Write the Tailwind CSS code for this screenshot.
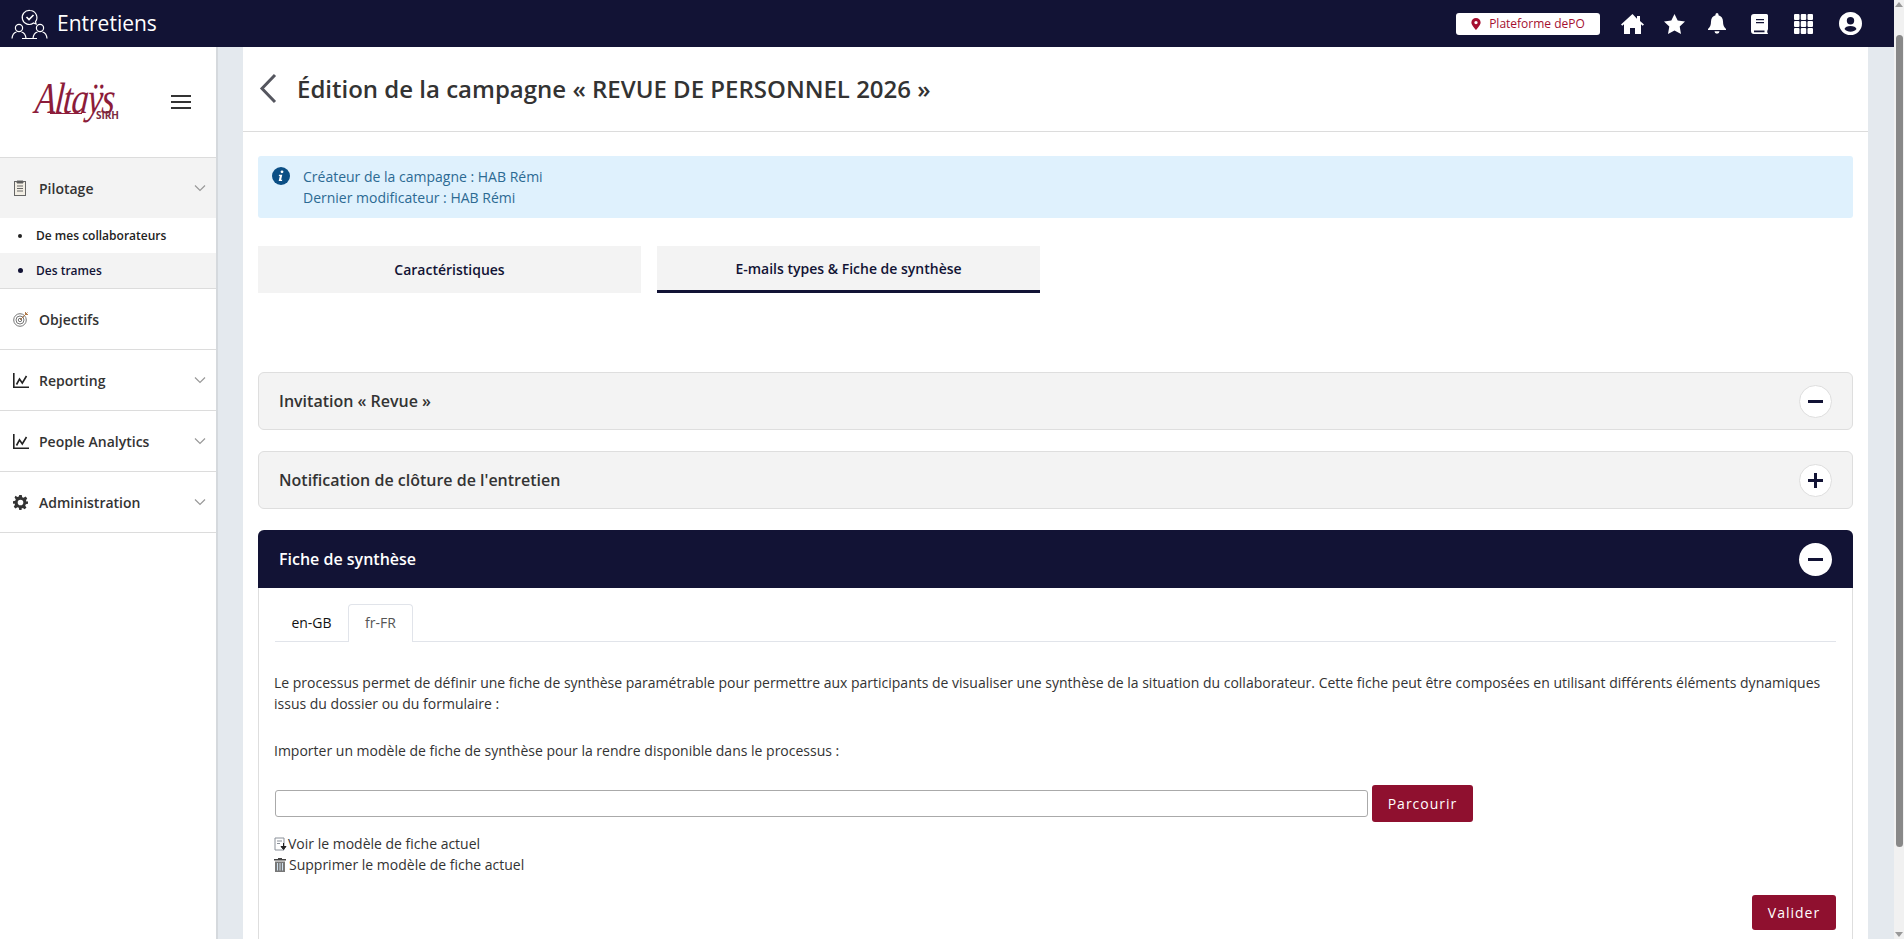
<!DOCTYPE html>
<html lang="fr">

<head>
    <meta charset="UTF-8">
    <title>Entretiens</title>
    <script src="https://cdn.jsdelivr.net/npm/@tailwindcss/browser@4"></script>
    <meta name="viewport" content="width=device-width, initial-scale=1.0">
</head>

<body class="h-screen overflow-hidden bg-[#e4e9ee] font-['Open_Sans',sans-serif] text-[#333]">
    <div class="flex h-[939px]">
        <div class="flex w-[1894px] flex-col">

            <!-- Top bar -->
            <header class="flex h-[47px] shrink-0 items-center bg-[#121335] text-white">
                <svg class="ml-[11px] h-[30px] w-[37px]" viewBox="0 0 37 30" fill="none" stroke="white" stroke-width="1.2">
                    <path d="M19 1.500a7 7 0 0 1 5.500 11.200l.6 2.300-2.600-1a7 7 0 1 1-3.500-12.500z" />
                    <path d="M15.500 8l2.500 2.500 4.500-4.500" stroke-width="1.600" />
                    <circle cx="8" cy="19" r="3.600" />
                    <path d="M1 29.500c.3-3.500 2.500-6 4.500-6.500M15 29.500c-.3-3.500-2.500-6-4.500-6.500" />
                    <circle cx="29" cy="19" r="3.600" />
                    <path d="M22 29.500c.3-3.500 2.500-6 4.500-6.500M36 29.500c-.3-3.500-2.500-6-4.500-6.500M11 29.500h15" />
                </svg>
                <span class="ml-[9px] text-[21px]">Entretiens</span>

                <a class="ml-auto flex h-[22px] w-[144px] items-center justify-center gap-[8px] rounded-[3px] bg-white text-[12px] text-[#a50f30]">
                    <svg class="h-[12px] w-[10px]" viewBox="0 0 10 13" fill="#a50f30">
                        <path fill-rule="evenodd" d="M5 0a5 5 0 0 1 5 5c0 2.500-3 6-5 8-2-2-5-5.500-5-8a5 5 0 0 1 5-5zm0 3.200a1.800 1.800 0 1 0 0 3.600 1.800 1.800 0 0 0 0-3.600z" />
                    </svg>
                    Plateforme dePO
                </a>

                <svg class="ml-[21px] h-[20px] w-[23px]" viewBox="0 0 23 20" fill="white">
                    <path d="M11.500 0L0 10.500l1.300 1.300L3 10.300V20h6v-6h5v6h6v-9.700l1.700 1.500 1.300-1.300-4-3.600V2h-3v2.800z" />
                </svg>
                <svg class="ml-[20px] h-[20px] w-[21px]" viewBox="0 0 21 20" fill="white">
                    <path d="M10.500 0l3.200 6.500 7.300 1-5.300 5.100 1.300 7.300-6.500-3.400-6.500 3.400 1.300-7.300L0 7.500l7.300-1z" />
                </svg>
                <svg class="ml-[23px] h-[21px] w-[18px]" viewBox="0 0 18 21" fill="white">
                    <path d="M9 0a1.500 1.500 0 0 1 1.500 1.500v.7C13.500 3 15 5.500 15 8.500c0 4 1 5.500 3 7.500v1H0v-1c2-2 3-3.500 3-7.500 0-3 1.500-5.500 4.500-6.300v-.7A1.500 1.500 0 0 1 9 0zM6.500 18.200h5a2.500 2.500 0 0 1-5 0z" />
                </svg>
                <svg class="ml-[25px] h-[20px] w-[17px]" viewBox="0 0 17 20" fill="white">
                    <path fill-rule="evenodd" d="M3 0h12.500a1.500 1.500 0 0 1 1.500 1.500V15c0 .8-.4 1-.6 1.500-.2.800-.2 1.700 0 2.300.3.400.6.500.6 1 0 .2-.2.200-.5.200H3a3 3 0 0 1-3-3V3a3 3 0 0 1 3-3zm2 5v1.200h8V5zm0 3v1.200h8V8zM3 16.500v1.800h10.500v-1.800z" />
                </svg>
                <svg class="ml-[26px] h-[20px] w-[19px]" viewBox="0 0 19 20" fill="white">
                    <rect width="5.500" height="6" rx="1" />
                    <rect x="6.750" width="5.500" height="6" rx="1" />
                    <rect x="13.500" width="5.500" height="6" rx="1" />
                    <rect y="7" width="5.500" height="6" rx="1" />
                    <rect x="6.750" y="7" width="5.500" height="6" rx="1" />
                    <rect x="13.500" y="7" width="5.500" height="6" rx="1" />
                    <rect y="14" width="5.500" height="6" rx="1" />
                    <rect x="6.750" y="14" width="5.500" height="6" rx="1" />
                    <rect x="13.500" y="14" width="5.500" height="6" rx="1" />
                </svg>
                <svg class="mr-[32px] ml-[26px] h-[23px] w-[23px]" viewBox="0 0 23 23" fill="white">
                    <path fill-rule="evenodd" d="M11.500 0a11.500 11.500 0 1 1 0 23 11.500 11.500 0 0 1 0-23zm0 5a3.700 3.700 0 1 0 0 7.400 3.700 3.700 0 0 0 0-7.400zm0 9c-3 0-5.500 1.200-6 3 1.400 1.700 3.600 2.800 6 2.800s4.600-1.100 6-2.800c-.5-1.800-3-3-6-3z" />
                </svg>
            </header>

            <div class="flex min-h-0 flex-1">

                <!-- Sidebar -->
                <aside class="w-[218px] shrink-0 border-r-2 border-[#d5d9dd] bg-white">
                    <div class="flex h-[111px] items-center border-b border-[#dcdcdc] pl-[37px]">
                        <div class="relative h-[46px] w-[82px] text-[#8c1c3a]">
                            <span class="block origin-top-left -skew-x-6 scale-x-[.78] font-['Liberation_Serif',serif] text-[44px] leading-[40px] tracking-[-1.500px] italic">Altaÿs</span>
                            <span class="absolute right-0 bottom-[5px] text-[10px] leading-none font-bold text-[#7a2a40]">SIRH</span>
                            <span class="absolute bottom-[11px] left-[13px] h-[1.500px] w-[32px] bg-[#8c1c3a]"></span>
                        </div>
                        <div class="ml-[52px] flex w-[20px] flex-col gap-[4px]">
                            <span class="h-[2px] bg-[#333]"></span>
                            <span class="h-[2px] bg-[#333]"></span>
                            <span class="h-[2px] bg-[#333]"></span>
                        </div>
                    </div>

                    <div class="flex h-[60px] items-center bg-[#f3f3f3] pl-[13px] pr-[10px] text-[14px] font-semibold">
                        <svg class="h-[16px] w-[14px]" viewBox="0 0 14 16" fill="none" stroke="#666" stroke-width="1">
                            <rect x="1.500" y="1.500" width="11" height="14" fill="#f3efe5" />
                            <path d="M4 1h6v2H4z" fill="#555" />
                            <path d="M4 6h6M4 8.500h6M4 11h6" />
                        </svg>
                        <span class="ml-[12px]">Pilotage</span>
                        <svg class="ml-auto h-[8px] w-[12px]" viewBox="0 0 12 8" fill="none" stroke="#999" stroke-width="1.200">
                            <path d="M1 1.500l5 5 5-5" />
                        </svg>
                    </div>
                    <div class="flex h-[35px] items-center pl-[18px] text-[12px] font-semibold text-[#222]">
                        <span class="h-[4px] w-[4px] rounded-full bg-[#222]"></span>
                        <span class="ml-[14px]">De mes collaborateurs</span>
                    </div>
                    <div class="flex h-[36px] items-center border-b border-[#dcdcdc] bg-[#f3f3f3] pl-[18px] text-[12px] font-semibold text-[#121335]">
                        <span class="h-[5px] w-[5px] rounded-full bg-[#121335]"></span>
                        <span class="ml-[13px]">Des trames</span>
                    </div>

                    <div class="flex h-[61px] items-center border-b border-[#dcdcdc] pl-[13px] pr-[10px] text-[14px] font-semibold">
                        <svg class="h-[16px] w-[16px]" viewBox="0 0 16 16" fill="none" stroke="#777" stroke-width="1">
                            <circle cx="7" cy="9" r="6.300" />
                            <circle cx="7" cy="9" r="4" />
                            <circle cx="7" cy="9" r="1.700" />
                            <path d="M7 9l7.500-7.500M12.500 1v2.500H15" stroke="#b07a4a" />
                        </svg>
                        <span class="ml-[10px]">Objectifs</span>
                    </div>
                    <div class="flex h-[61px] items-center border-b border-[#dcdcdc] pl-[13px] pr-[10px] text-[14px] font-semibold">
                        <svg class="h-[15px] w-[16px]" viewBox="0 0 16 15" fill="none" stroke="#222" stroke-width="1.600">
                            <path d="M.8 0v14.200H16" />
                            <path d="M3.500 11.500L6.500 6l2.800 4L13.500 3" />
                        </svg>
                        <span class="ml-[10px]">Reporting</span>
                        <svg class="ml-auto h-[8px] w-[12px]" viewBox="0 0 12 8" fill="none" stroke="#999" stroke-width="1.200">
                            <path d="M1 1.500l5 5 5-5" />
                        </svg>
                    </div>
                    <div class="flex h-[61px] items-center border-b border-[#dcdcdc] pl-[13px] pr-[10px] text-[14px] font-semibold">
                        <svg class="h-[15px] w-[16px]" viewBox="0 0 16 15" fill="none" stroke="#222" stroke-width="1.600">
                            <path d="M.8 0v14.200H16" />
                            <path d="M3.500 11.500L6.500 6l2.800 4L13.500 3" />
                        </svg>
                        <span class="ml-[10px]">People Analytics</span>
                        <svg class="ml-auto h-[8px] w-[12px]" viewBox="0 0 12 8" fill="none" stroke="#999" stroke-width="1.200">
                            <path d="M1 1.500l5 5 5-5" />
                        </svg>
                    </div>
                    <div class="flex h-[61px] items-center border-b border-[#dcdcdc] pl-[13px] pr-[10px] text-[14px] font-semibold">
                        <svg class="h-[15px] w-[15px]" viewBox="0 0 24 24" fill="#333">
                            <path fill-rule="evenodd" d="M10 0h4l.7 3.500 2.300 1 3-2 2.800 2.800-2 3 1 2.300L24 10v4l-3.500.7-1 2.300 2 3-2.800 2.800-3-2-2.300 1L14 24h-4l-.7-3.500-2.300-1-3 2L1.200 18.700l2-3-1-2.300L0 14v-4l3.500-.7 1-2.300-2-3L4 1.200l3 2 2.300-1zM12 7.500a4.500 4.500 0 1 0 0 9 4.500 4.500 0 0 0 0-9z" />
                        </svg>
                        <span class="ml-[11px]">Administration</span>
                        <svg class="ml-auto h-[8px] w-[12px]" viewBox="0 0 12 8" fill="none" stroke="#999" stroke-width="1.200">
                            <path d="M1 1.500l5 5 5-5" />
                        </svg>
                    </div>
                </aside>

                <!-- Main -->
                <main class="ml-[25px] mr-[26px] min-w-0 flex-1 overflow-hidden bg-white">
                    <div class="flex h-[85px] items-center border-b border-[#dcdcdc] pl-[16px]">
                        <svg class="-mt-[2px] h-[31px] w-[18px]" viewBox="0 0 18 31" fill="none" stroke="#55565f" stroke-width="3">
                            <path d="M16 2L3 15.500 16 29" />
                        </svg>
                        <h1 class="ml-[20px] text-[24px] font-semibold text-[#333]">Édition de la campagne « REVUE DE PERSONNEL 2026 »</h1>
                    </div>

                    <div class="px-[15px]">
                        <div class="mt-[24px] flex h-[62px] rounded-[3px] bg-[#dff1fd] pl-[14px] pt-[10px]">
                            <svg class="mt-[1px] h-[18px] w-[18px]" viewBox="0 0 18 18">
                                <circle cx="9" cy="9" r="9" fill="#0b4f85" />
                                <circle cx="10" cy="4.800" r="1.400" fill="white" />
                                <path d="M7 7.800h3.300l-1.200 5h1.200l-.3 1.200H6.700l1.100-5H6.800z" fill="white" />
                            </svg>
                            <p class="ml-[13px] text-[14px] leading-[21px] text-[#2c6a93]">Créateur de la campagne : HAB Rémi<br>Dernier modificateur : HAB Rémi</p>
                        </div>

                        <div class="mt-[28px] flex gap-[16px] text-[14px] font-semibold text-[#121335]">
                            <div class="flex h-[47px] w-[383px] items-center justify-center bg-[#f3f3f3]">Caractéristiques</div>
                            <div class="flex h-[47px] w-[383px] items-center justify-center border-b-[3px] border-[#121335] bg-[#f3f3f3]">E-mails types &amp; Fiche de synthèse</div>
                        </div>

                        <div class="mt-[79px] flex h-[58px] items-center justify-between rounded-[6px] border border-[#dedede] bg-[#f3f3f3] pl-[20px] pr-[20px] text-[16px] font-semibold">
                            Invitation « Revue »
                            <span class="flex h-[33px] w-[33px] items-center justify-center rounded-full border border-[#dedede] bg-white">
                                <svg class="h-[15px] w-[15px]" viewBox="0 0 15 15" fill="#121335"><rect y="6" width="15" height="3" /></svg>
                            </span>
                        </div>
                        <div class="mt-[21px] flex h-[58px] items-center justify-between rounded-[6px] border border-[#dedede] bg-[#f3f3f3] pl-[20px] pr-[20px] text-[16px] font-semibold">
                            Notification de clôture de l'entretien
                            <span class="flex h-[33px] w-[33px] items-center justify-center rounded-full border border-[#dedede] bg-white">
                                <svg class="h-[15px] w-[15px]" viewBox="0 0 15 15" fill="#121335"><path d="M6 0h3v6h6v3H9v6H6V9H0V6h6z" /></svg>
                            </span>
                        </div>

                        <div class="mt-[21px] rounded-t-[6px] border-x border-[#dedede]">
                            <div class="-mx-px flex h-[58px] items-center justify-between rounded-t-[6px] bg-[#121335] pl-[21px] pr-[21px] text-[16px] font-semibold text-white">
                                Fiche de synthèse
                                <span class="flex h-[33px] w-[33px] items-center justify-center rounded-full bg-white">
                                    <svg class="h-[15px] w-[15px]" viewBox="0 0 15 15" fill="#121335"><rect y="6" width="15" height="3" /></svg>
                                </span>
                            </div>
                            <div class="px-[16px] pt-[16px] pb-[60px] text-[14px] leading-[21px]">
                                <div class="flex h-[38px] border-b border-[#e1e4ea]">
                                    <span class="flex h-[36px] w-[73px] items-center justify-center text-[#111]">en-GB</span>
                                    <span class="flex h-[38px] w-[65px] items-center justify-center rounded-t-[4px] border-x border-t border-[#e1e4ea] bg-white pb-[2px] text-[#555]">fr-FR</span>
                                </div>
                                <p class="mt-[30px] -ml-px">Le processus permet de définir une fiche de synthèse paramétrable pour permettre aux participants de visualiser une synthèse de la situation du collaborateur. Cette fiche peut être composées en utilisant différents éléments dynamiques issus du dossier ou du formulaire :</p>
                                <p class="mt-[26px] -ml-px">Importer un modèle de fiche de synthèse pour la rendre disponible dans le processus :</p>
                                <div class="mt-[24px] flex items-center gap-[4px]">
                                    <input type="text" class="h-[27px] w-[1093px] rounded-[3px] border border-[#aaa] bg-white">
                                    <button class="h-[37px] w-[101px] rounded-[3px] bg-[#8f102f] text-[14px] tracking-[1px] text-white">Parcourir</button>
                                </div>
                                <p class="mt-[11px] -ml-px flex items-center gap-[1px]">
                                    <svg class="h-[14px] w-[13px]" viewBox="0 0 13 14" fill="none" stroke="#8a9099">
                                        <path d="M1 1h9v12H1zM3 4h5M3 6.500h3" />
                                        <path d="M9.500 6v5M7 9.500l2.500 3 2.500-3z" stroke="#222" fill="#222" />
                                    </svg>
                                    Voir le modèle de fiche actuel
                                </p>
                                <p class="-ml-px flex items-center gap-[3px]">
                                    <svg class="h-[14px] w-[12px]" viewBox="0 0 12 14" fill="#777">
                                        <path d="M4 0h4v1h4v1.500H0V1h4z" fill="#444" />
                                        <path d="M1 3.500h10V14H1z" />
                                        <path d="M3.500 5v7.500M6 5v7.500M8.500 5v7.500" stroke="#cfe0ee" />
                                    </svg>
                                    Supprimer le modèle de fiche actuel
                                </p>
                                <div class="mt-[20px] flex justify-end">
                                    <button class="h-[35px] w-[84px] rounded-[3px] bg-[#8f102f] text-[14px] tracking-[1px] text-white">Valider</button>
                                </div>
                            </div>
                        </div>
                    </div>
                </main>
            </div>
        </div>

        <!-- Scrollbar -->
        <div class="flex w-[10px] flex-col items-center bg-[#f1f1f1] pt-[2px] pb-[2px]">
            <span class="h-0 w-0 border-x-[4px] border-b-[5px] border-x-transparent border-b-[#999]"></span>
            <span class="mt-[28px] h-[812px] w-[7px] rounded-full bg-[#888]"></span>
            <span class="mt-auto h-0 w-0 border-x-[4px] border-t-[5px] border-x-transparent border-t-[#999]"></span>
        </div>
    </div>
</body>

</html>
